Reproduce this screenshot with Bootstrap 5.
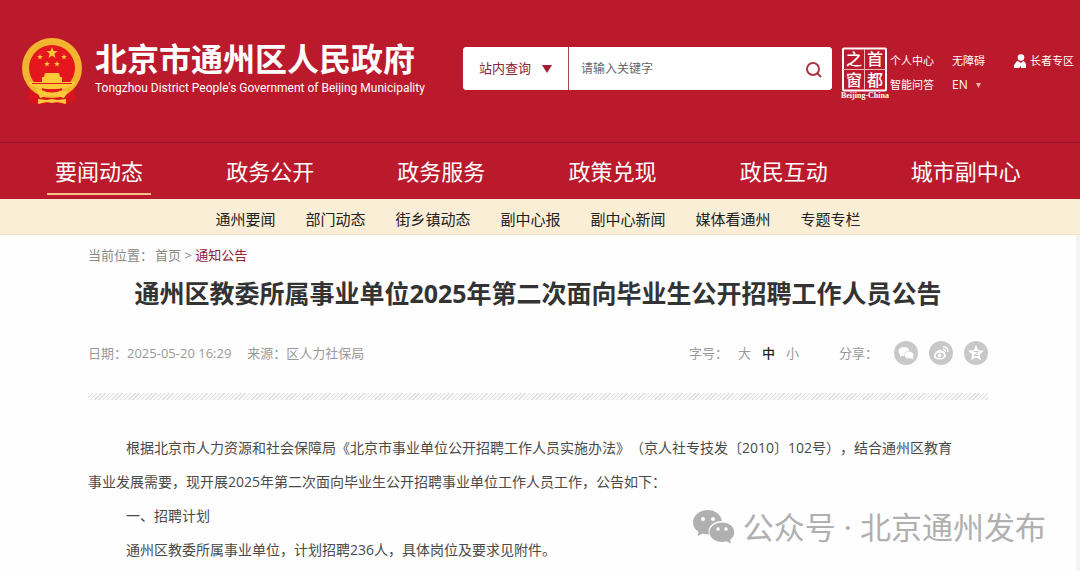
<!DOCTYPE html>
<html lang="zh-CN">
<head>
<meta charset="utf-8">
<meta name="viewport" content="width=device-width, initial-scale=1">
<title>通州区教委所属事业单位2025年第二次面向毕业生公开招聘工作人员公告</title>
<link href="https://cdn.jsdelivr.net/npm/bootstrap@5.3.0/dist/css/bootstrap.min.css" rel="stylesheet">
<style>
  body { font-family: "Open Sans", "Noto Sans CJK SC", sans-serif; font-size: 14px; color: #4a4a4a; background: #fefefe; }
  a { text-decoration: none; color: inherit; }
  .site-header { background: #bb1a2c; color: #fff; }
  .masthead { height: 142px; padding: 0 6px 0 20px; }
  .emblem { width: 64px; height: 68px; margin-right: 11px; }
  .brand { margin-bottom: 8px; }
  .brand-cn { font-size: 32px; line-height: 42px; font-weight: 700; font-family: "Noto Sans CJK SC", sans-serif; }
  .brand-en { font-size: 12px; line-height: 20px; font-family: Roboto, sans-serif; white-space: nowrap; }
  .search-box { width: 369px; height: 43px; margin-bottom: 5px; border-radius: 4px; background: #fff; overflow: hidden; }
  .search-scope { width: 106px; padding: 0 16px; border: 0; border-right: 1px solid #9c4a52; background: #fff; color: #8f2337; font-size: 13px; appearance: none; }
  .scope-wrap .caret { right: 17px; top: 18px; }
  .search-input { min-width: 0; border: 0; padding: 0 12px; font-size: 12px; outline: 0; color: #555; }
  .search-input::placeholder { color: #666; opacity: 1; }
  .search-go { width: 36px; border: 0; background: #fff; padding: 0; }
  .capital-logo { margin-top: 4px; }
  .capital-logo svg { display: block; overflow: visible; }
  .tools { font-size: 11px; line-height: 16px; margin-top: 4px; }
  .tool-col { margin-right: 18px; }
  .en-link { font-size: 12px; }
  .senior { margin-left: 29px; }
  .main-nav { border-top: 1px solid #96162a; height: 57px; padding: 0 6px 0 47px; display: grid; grid-template-columns: repeat(6, 1fr); justify-items: start; }
  .main-nav a { font-size: 22px; line-height: 32px; padding: 12px 8px 6px; margin-bottom: 4px; border-bottom: 2px solid transparent; white-space: nowrap; }
  .main-nav a.active { border-color: #f3c486; }
  .sub-nav { background: #fbeed6; border-bottom: 1px solid #f2e4c6; height: 36px; padding: 5px 4px 0 0; gap: 30px; font-size: 15px; color: #222; }
  .page-main { border-right: 4px solid #f3f3f3; }
  .article-wrap { max-width: 900px; margin: 0 auto; }
  .crumbs { font-size: 13px; line-height: 20px; padding-top: 10px; color: #888; }
  .crumbs .home { margin-left: 2px; }
  .crumbs .here { color: #8f2337; }
  .article-title { font-size: 25px; line-height: 36px; font-weight: 700; color: #333; margin: 10px 0 30px; text-align: center; }
  .meta { font-size: 13px; line-height: 24px; color: #999; }
  .size-links { gap: 11px; margin: 0 40px 0 10px; }
  .size-links .current { color: #222; font-weight: 500; }
  .share { gap: 11px; }
  .hatch { height: 7px; margin: 28px 0 31px; background: repeating-linear-gradient(135deg, #e2e2e2 0 1px, #f8f8f8 1px 3px); }
  .article-body { line-height: 34px; padding-right: 28px; text-spacing-trim: space-all; }
  .article-body p { margin: 0; text-indent: 38px; }
  .watermark { right: 30px; bottom: 22px; gap: 8px; color: #b0b0b0; font-size: 31px; line-height: 44px; white-space: nowrap; }
</style>
</head>
<body class="d-flex flex-column min-vh-100">
<header class="site-header">
  <div class="masthead d-flex align-items-center">
    <svg class="emblem flex-shrink-0" viewBox="0 0 64 68" aria-hidden="true">
      <defs><path id="star" d="M0-6 1.500-2 5.700-1.900 2.400.8 3.500 4.900 0 2.500-3.500 4.900-2.400.8-5.700-1.900-1.500-2z"/></defs>
      <path d="M9 50 8 65l13 3 11-3 11 3 13-3-1-15z" fill="#d9141c"/>
      <circle cx="32" cy="31" r="30" fill="#f3b52f"/>
      <circle cx="32" cy="31" r="23" fill="#e5161d"/>
      <g fill="#ffc93a">
        <use href="#star" x="32" y="16"/>
        <use href="#star" transform="translate(20 20) scale(.5)"/><use href="#star" transform="translate(44 20) scale(.5)"/>
        <use href="#star" transform="translate(27 27) scale(.5)"/><use href="#star" transform="translate(37 27) scale(.5)"/>
        <path d="M25 36h14l1 4h2v5h13l-1 3-10 4H20l-10-4-1-3h13v-5h2z"/>
        <path d="M16 52q8 0 16 3 8-3 16 0l-4 6q-12-5-24 0zM18 62l9 1 5-1 5 1 9-1v5l-9-2-5 1-5-1-9 2z"/>
      </g>
      <path d="M12 46.500h40" stroke="#e5161d" stroke-width="1"/>
      <path d="M22 52q10 5 20 0" fill="none" stroke="#e5161d" stroke-width="2"/>
    </svg>
    <div class="brand me-auto">
      <div class="brand-cn">北京市通州区人民政府</div>
      <div class="brand-en">Tongzhou District People's Government of Beijing Municipality</div>
    </div>
    <form class="search-box d-flex flex-shrink-0">
      <div class="scope-wrap position-relative d-flex">
        <select class="search-scope" aria-label="查询范围"><option>站内查询</option></select>
        <svg class="caret position-absolute pe-none" width="10" height="8" viewBox="0 0 10 8" aria-hidden="true"><path d="M0 0h10L5 8z" fill="#a51c35"/></svg>
      </div>
      <input class="search-input flex-grow-1" type="text" placeholder="请输入关键字" aria-label="关键字">
      <button class="search-go" type="button" aria-label="搜索"><svg width="18" height="18" viewBox="0 0 18 18" fill="none" stroke="#ac3545" stroke-width="2"><circle cx="8" cy="8" r="6"/><path d="M12.500 12.500 16 16"/></svg></button>
    </form>
    <a href="#" class="capital-logo ms-2 flex-shrink-0" aria-label="首都之窗">
      <svg width="50" height="52" viewBox="0 0 50 52">
        <rect x="3" y="1.500" width="43" height="42" rx="1" fill="none" stroke="#fff" stroke-width="2"/>
        <path d="M24.500 2v41M3 22.500h43" stroke="#f3b9bd" stroke-width="1"/>
        <g fill="#fff" font-family="Noto Sans CJK SC, sans-serif" font-weight="500" font-size="16" text-anchor="middle"><text x="14" y="18">之</text><text x="35" y="18">首</text><text x="14" y="39">窗</text><text x="35" y="39">都</text></g>
        <text x="25" y="51" fill="#fff" font-family="Liberation Serif, serif" font-weight="700" font-size="8" text-anchor="middle">Beijing-China</text>
      </svg>
    </a>
    <div class="tools d-flex flex-shrink-0 text-nowrap">
      <div class="tool-col d-grid gap-2"><a href="#">个人中心</a><a href="#">智能问答</a></div>
      <div class="d-grid gap-2"><a href="#">无障碍</a><a href="#" class="en-link">EN<svg class="ms-2" width="5" height="5" viewBox="0 0 5 5"><path d="M0 0h5L2.500 5z" fill="#f0b0a8"/></svg></a></div>
      <a href="#" class="senior d-flex align-items-center align-self-start"><svg class="me-1" width="12" height="14" viewBox="0 0 12 14" fill="#fff"><circle cx="7" cy="3.500" r="3.300"/><path d="M0 14v-3l3-4q2 0 4 2l2-2q3 1 3 4v3H7v-2l-2 2z"/></svg>长者专区</a>
    </div>
  </div>
  <nav class="main-nav" aria-label="主导航">
    <a href="#" class="active">要闻动态</a><a href="#">政务公开</a><a href="#">政务服务</a><a href="#">政策兑现</a><a href="#">政民互动</a><a href="#">城市副中心</a>
  </nav>
</header>
<nav class="sub-nav d-flex justify-content-center align-items-center" aria-label="栏目导航">
  <a href="#">通州要闻</a><a href="#">部门动态</a><a href="#">街乡镇动态</a><a href="#">副中心报</a><a href="#">副中心新闻</a><a href="#">媒体看通州</a><a href="#">专题专栏</a>
</nav>
<main class="page-main position-relative flex-grow-1">
  <article class="article-wrap">
    <div class="crumbs">当前位置：<a href="#" class="home">首页</a> &gt; <a href="#" class="here">通知公告</a></div>
    <h1 class="article-title">通州区教委所属事业单位2025年第二次面向毕业生公开招聘工作人员公告</h1>
    <div class="meta d-flex align-items-center">
      <span>日期：2025-05-20 16:29</span><span class="ms-3 me-auto">来源：区人力社保局</span>
      <span>字号：</span>
      <div class="size-links d-flex"><a href="#">大</a><a href="#" class="current">中</a><a href="#">小</a></div>
      <span>分享：</span>
      <div class="share d-flex ms-3">
        <a href="#" aria-label="微信" class="d-flex"><svg width="24" height="24" viewBox="0 0 24 24"><circle cx="12" cy="12" r="12" fill="#c8c8c8"/><g fill="#fff"><ellipse cx="10" cy="10.500" rx="5.500" ry="4.500"/><path d="M6 13v3l3-2z"/><ellipse cx="15" cy="14" rx="4.800" ry="3.800" stroke="#c8c8c8" stroke-width=".7"/><path d="M16 17l3 1.500-.5-3z"/></g></svg></a>
        <a href="#" aria-label="微博" class="d-flex"><svg width="24" height="24" viewBox="0 0 24 24"><circle cx="12" cy="12" r="12" fill="#c8c8c8"/><path d="M10 9c2-1 3 0 2.500 1.500 3-1 4 .2 3.200 1.700C19 15 15 18.500 10.500 18.500S4 16 5.500 13 9 9.500 10 9z" fill="#fff"/><ellipse cx="10.800" cy="14.500" rx="4" ry="2.800" fill="#c8c8c8"/><circle cx="10.500" cy="14.500" r="1.900" fill="#fff"/><path d="M14 6q5-.5 5 5M14 8.500q2.500-.2 2.500 2.300" fill="none" stroke="#fff" stroke-width="1.300"/></svg></a>
        <a href="#" aria-label="QQ空间" class="d-flex"><svg width="24" height="24" viewBox="0 0 24 24"><circle cx="12" cy="12" r="12" fill="#c8c8c8"/><path d="M12 4l2.300 5.200 5.700.6-4.300 3.800 1.300 5.600-5-2.900-5 2.900 1.300-5.600L4 9.800l5.700-.6z" fill="#fff"/><path d="M9.500 10.500h5l-4.500 4h4.500" fill="none" stroke="#c8c8c8"/></svg></a>
      </div>
    </div>
    <div class="hatch"></div>
    <div class="article-body">
      <p>根据北京市人力资源和社会保障局《北京市事业单位公开招聘工作人员实施办法》（京人社专技发〔2010〕102号），结合通州区教育事业发展需要，现开展2025年第二次面向毕业生公开招聘事业单位工作人员工作，公告如下：</p>
      <p>一、招聘计划</p>
      <p>通州区教委所属事业单位，计划招聘236人，具体岗位及要求见附件。</p>
    </div>
  </article>
  <div class="watermark position-absolute d-flex align-items-center">
    <svg width="42" height="34" viewBox="0 0 42 34" aria-hidden="true"><path d="M15 0C6 0 0 6 0 12.500c0 4 2 7 5.500 9.300L4.500 26l5-2.500q3 1 6.500.9C14 17 20 11 29 11 27.500 4 22 0 15 0z" fill="#b0b0b0"/><path d="M29 12.500c-7 0-12.500 4.300-12.500 9.700S22 32 29 32q2.500 0 4.500-.7L38 33.500l-1-3.700c2.700-2 4.300-4.500 4.300-7.600 0-5.400-5.300-9.700-12.300-9.700z" fill="#b0b0b0"/><g fill="#fff"><circle cx="10" cy="9" r="2"/><circle cx="20" cy="9" r="2"/><circle cx="25" cy="19" r="1.700"/><circle cx="33" cy="19" r="1.700"/></g></svg>
    <span>公众号 · 北京通州发布</span>
  </div>
</main>
<script src="https://cdn.jsdelivr.net/npm/bootstrap@5.3.0/dist/js/bootstrap.bundle.min.js"></script>
</body>
</html>
